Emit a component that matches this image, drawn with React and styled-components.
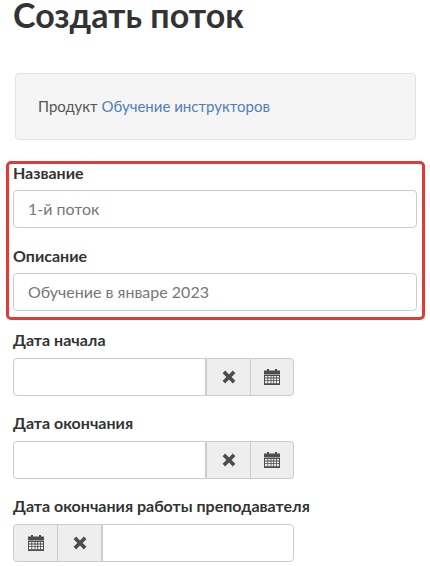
import styled, { createGlobalStyle } from "styled-components";

const GlobalStyle = createGlobalStyle`
  html, body {
    margin: 0;
    padding: 0;
    background: #fff;
    overflow: hidden;
  }
  body {
    font-family: "Lato", "Noto Sans", sans-serif;
    color: #333;
  }
  * {
    box-sizing: border-box;
  }
`;

const Page = styled.div`
  width: 430px;
  height: 566px;
  overflow: hidden;
  padding: 0 13px;
`;

const Title = styled.h1`
  margin: 0 0 43px 0;
  font-size: 34px;
  line-height: 30px;
  font-weight: 700;
  color: #333;
`;

const Well = styled.div`
  width: 401px;
  height: 67px;
  margin: 0 0 21px 2px;
  padding: 0 22px 2px;
  display: flex;
  align-items: center;
  background: #f5f5f5;
  border: 1px solid #e3e3e3;
  border-radius: 4px;
  font-size: 15px;
  color: #555;
`;

const ProductLink = styled.a`
  color: #4f7fb8;
  margin-left: 4px;
  text-decoration: none;
`;

const Highlight = styled.div`
  width: 419px;
  height: 159px;
  margin: 0 0 11px -7px;
  padding: 0 5px 0 4px;
  border: 3px solid #e53935;
  border-radius: 5px;
`;

const Field = styled.div`
  margin-bottom: ${(props) => props.$gap || 0}px;
`;

const Label = styled.label`
  display: block;
  height: 20px;
  line-height: 18px;
  margin-bottom: ${(props) => (props.$date ? 7 : 6)}px;
  font-size: 16px;
  font-weight: 700;
  color: #333;
`;

const TextInput = styled.input`
  display: block;
  width: 404px;
  height: 38px;
  padding: 0 14px 2px;
  border: 1px solid #ccc;
  border-radius: 4px;
  background: #fff;
  font: inherit;
  font-size: 16px;
  color: #555;
  outline: none;
  &::placeholder {
    color: #777;
    opacity: 1;
  }
`;

const DateGroup = styled.div`
  display: flex;
  width: 281px;
  height: 38px;
`;

const DateInput = styled.input`
  flex: 1;
  min-width: 0;
  height: 100%;
  border: 1px solid #ccc;
  border-radius: ${(props) => (props.$flip ? "0 4px 4px 0" : "4px 0 0 4px")};
  background: #fff;
  outline: none;
`;

const Addon = styled.span`
  width: 45px;
  height: 100%;
  display: flex;
  align-items: center;
  justify-content: center;
  background: #eee;
  border: 1px solid #ccc;
  margin-left: -1px;
  color: #4d4d4d;
  ${DateInput} + & {
    margin-left: 0;
  }
  &:first-child {
    margin-left: 0;
    border-radius: 4px 0 0 4px;
  }
  &:last-child {
    width: 44px;
    border-radius: 0 4px 4px 0;
  }
`;

const ClearIcon = () => (
  <svg width="14" height="14" viewBox="0 0 14 14" fill="currentColor">
    <path d="M3.2.6 7 4.4 10.8.6 13.4 3.2 9.6 7l3.8 3.8-2.6 2.6L7 9.6l-3.8 3.8L.6 10.8 4.4 7 .6 3.2z" />
  </svg>
);

const CalendarIcon = () => (
  <svg width="16" height="16" viewBox="0 0 16 16" fill="currentColor">
    <path d="M3 0h2v1.5h6V0h2v1.5h3v4H0v-4h3z" />
    <path
      fillRule="evenodd"
      d="M0 6h16v10H0zM1 7v1.6h2.4V7zm3.2 0v1.6h2.4V7zm3.2 0v1.6h1.9V7zm2.7 0v1.6h1.9V7zm2.7 0v1.6H15V7zM1 9.4v1.6h2.4V9.4zm3.2 0v1.6h2.4V9.4zm3.2 0v1.6h1.9V9.4zm2.7 0v1.6h1.9V9.4zm2.7 0v1.6H15V9.4zM1 11.8v2.4h2.4v-2.4zm3.2 0v2.4h2.4v-2.4zm3.2 0v2.4h1.9v-2.4zm2.7 0v2.4h1.9v-2.4zm2.7 0v2.4H15v-2.4z"
    />
  </svg>
);

const App = () => (
  <Page>
    <GlobalStyle />
    <Title>Создать поток</Title>
    <Well>
      Продукт <ProductLink href="#">Обучение инструкторов</ProductLink>
    </Well>
    <Highlight>
      <Field $gap={19}>
        <Label>Название</Label>
        <TextInput placeholder="1-й поток" />
      </Field>
      <Field>
        <Label>Описание</Label>
        <TextInput placeholder="Обучение в январе 2023" />
      </Field>
    </Highlight>
    <Field $gap={18}>
      <Label $date>Дата начала</Label>
      <DateGroup>
        <DateInput />
        <Addon>
          <ClearIcon />
        </Addon>
        <Addon>
          <CalendarIcon />
        </Addon>
      </DateGroup>
    </Field>
    <Field $gap={18}>
      <Label $date>Дата окончания</Label>
      <DateGroup>
        <DateInput />
        <Addon>
          <ClearIcon />
        </Addon>
        <Addon>
          <CalendarIcon />
        </Addon>
      </DateGroup>
    </Field>
    <Field>
      <Label $date>Дата окончания работы преподавателя</Label>
      <DateGroup>
        <Addon>
          <CalendarIcon />
        </Addon>
        <Addon>
          <ClearIcon />
        </Addon>
        <DateInput $flip />
      </DateGroup>
    </Field>
  </Page>
);

export default App;
